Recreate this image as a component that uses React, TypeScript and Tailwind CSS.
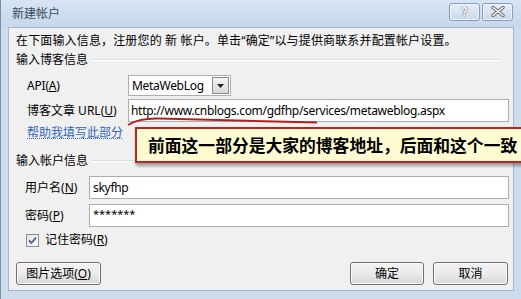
import React from "react";

const font = {
  fontFamily: '"Noto Sans", "Noto Sans CJK SC", sans-serif',
};

function Key({ k }: { k: string }) {
  return (
    <>
      (<span className="underline">{k}</span>)
    </>
  );
}

function GroupHeader({ label }: { label: string }) {
  return (
    <div className="flex h-[18px] items-center">
      <span>{label}</span>
      <div className="ml-[4px] mr-[8px] flex-1 border-t border-b border-t-[#d5dfe5] border-b-white" />
    </div>
  );
}

function WinButton({ children, className }: { children: React.ReactNode; className?: string }) {
  return (
    <button
      type="button"
      className={
        "flex h-[23px] items-center justify-center rounded-[3px] border border-[#707070] bg-gradient-to-b from-[#f3f3f3] via-[#ebebeb] to-[#d7d7d7] text-[12px] text-black shadow-[inset_0_0_0_1px_#fcfcfc] " +
        (className ?? "")
      }
    >
      {children}
    </button>
  );
}

function TitleButton({ children }: { children: React.ReactNode }) {
  return (
    <div className="flex h-[18px] w-[31px] items-center justify-center rounded-[3px] border border-[#8c9db2] bg-gradient-to-b from-[#e6eef7] to-[#c9d8ea] shadow-[inset_0_0_0_1px_#eef4fb]">
      {children}
    </div>
  );
}

export default function App() {
  return (
    <div
      className="relative flex h-[299px] w-[521px] flex-col overflow-hidden border-l border-[#7d8ea2] bg-[#cddded] text-[12px] text-black"
      style={font}
    >
      {/* title bar */}
      <div className="flex h-[27px] shrink-0 items-center bg-gradient-to-b from-[#d6e4f3] to-[#c6d8ec] pl-[11px] pr-[8px]">
        <span className="text-[12px] text-[#3a4a5c]">新建帐户</span>
        <div className="ml-auto mb-[4px] flex gap-[2px]">
          <TitleButton>
            <span className="text-[13px] font-bold leading-none text-white [text-shadow:0_0_1px_#444,0_0_1px_#444]">?</span>
          </TitleButton>
          <TitleButton>
            <svg width="14" height="11" viewBox="0 0 14 11">
              <path d="M2 1.5 L12 9.5 M12 1.5 L2 9.5" stroke="#5d6570" strokeWidth="3.4" strokeLinecap="round" />
              <path d="M2 1.5 L12 9.5 M12 1.5 L2 9.5" stroke="#ffffff" strokeWidth="1.6" strokeLinecap="round" />
            </svg>
          </TitleButton>
        </div>
      </div>

      {/* client area */}
      <div className="mx-[7px] flex flex-1 flex-col border border-[#a3b6cb] bg-[#f0f0f0] pl-[7px] pr-[4px] pt-[3px]">
        <div className="flex h-[20px] items-center tracking-[0.15px]">
          在下面输入信息，注册您的 新 帐户。单击“确定”以与提供商联系并配置帐户设置。
        </div>
        <GroupHeader label="输入博客信息" />

        <div className="mt-[5px] flex h-[23px] items-center pl-[11px]">
          <span className="w-[101px] tracking-[-0.2px]">
            API<Key k="A" />
          </span>
          <div className="flex h-[21px] w-[103px] items-center border border-[#abadb3] bg-white pl-[3px] pr-[1px]">
            <span className="flex-1 tracking-[-0.3px]">MetaWebLog</span>
            <div className="flex h-[17px] w-[17px] items-center justify-center border border-[#8a8a8a] bg-gradient-to-b from-[#f4f4f4] to-[#d9d9d9]">
              <svg width="7" height="4" viewBox="0 0 7 4">
                <path d="M0 0 H7 L3.5 4 Z" fill="#222" />
              </svg>
            </div>
          </div>
        </div>

        <div className="mt-[2px] flex h-[23px] items-center pl-[11px]">
          <span className="w-[101px] whitespace-nowrap">
            博客文章 URL<Key k="U" />
          </span>
          <div className="flex h-[23px] flex-1 items-center border border-[#abadb3] bg-white pl-[2px] tracking-[-0.3px]">
            http://www.cnblogs.com/gdfhp/services/metaweblog.aspx
          </div>
        </div>

        <div className="mt-[3px] flex h-[16px] items-center pl-[11px]">
          <span className="text-[#3366bb] underline decoration-dotted">帮助我填写此部分</span>
        </div>

        <div className="mt-[11px]">
          <GroupHeader label="输入帐户信息" />
        </div>

        <div className="mt-[6px] flex h-[23px] items-center pl-[9px]">
          <span className="w-[64px]">
            用户名<Key k="N" />
          </span>
          <div className="flex h-[23px] flex-1 items-center border border-[#abadb3] bg-white pl-[3px] tracking-[-0.3px]">
            skyfhp
          </div>
        </div>

        <div className="mt-[5px] flex h-[23px] items-center pl-[9px]">
          <span className="w-[64px]">
            密码<Key k="P" />
          </span>
          <div className="flex h-[23px] flex-1 items-start border border-[#abadb3] bg-white pl-[3px] pt-[1px] text-[11px]">
            *******
          </div>
        </div>

        <div className="mt-[5px] flex h-[16px] items-center pl-[10px]">
          <div className="flex h-[13px] w-[13px] items-center justify-center border border-[#8e8f8f] bg-gradient-to-br from-[#e0e3e8] to-[#fdfdfd]">
            <svg width="9" height="9" viewBox="0 0 9 9">
              <path d="M1 4.5 L3.5 7 L8 1.5" stroke="#4a5f97" strokeWidth="1.8" fill="none" />
            </svg>
          </div>
          <span className="ml-[6px]">
            记住密码<Key k="R" />
          </span>
        </div>

        <div className="mt-[14px] flex items-center pr-[1px]">
          <WinButton className="w-[85px]">
            图片选项<Key k="O" />
          </WinButton>
          <WinButton className="ml-auto w-[74px]">确定</WinButton>
          <WinButton className="ml-[9px] w-[75px]">取消</WinButton>
        </div>
      </div>
      <div className="h-[8px] shrink-0" />

      {/* red annotation underline */}
      <svg className="pointer-events-none absolute left-0 top-0" width="521" height="299">
        <path
          d="M127 125 Q 138 118 158 118.5 L 316 122.5"
          stroke="#b3201c"
          strokeWidth="2"
          fill="none"
        />
      </svg>

      {/* annotation callout */}
      <div className="absolute left-[134px] top-[127px] flex h-[36px] w-[400px] items-center border-2 border-[#b82420] bg-[#fdfbd2] pl-[11px] shadow-[1px_3px_3px_rgba(0,0,0,0.35)]">
        <span className="whitespace-nowrap text-[16.8px] font-bold leading-none text-black" style={{ fontFamily: '"Noto Sans CJK SC", sans-serif' }}>
          前面这一部分是大家的博客地址，后面和这个一致
        </span>
      </div>
    </div>
  );
}
